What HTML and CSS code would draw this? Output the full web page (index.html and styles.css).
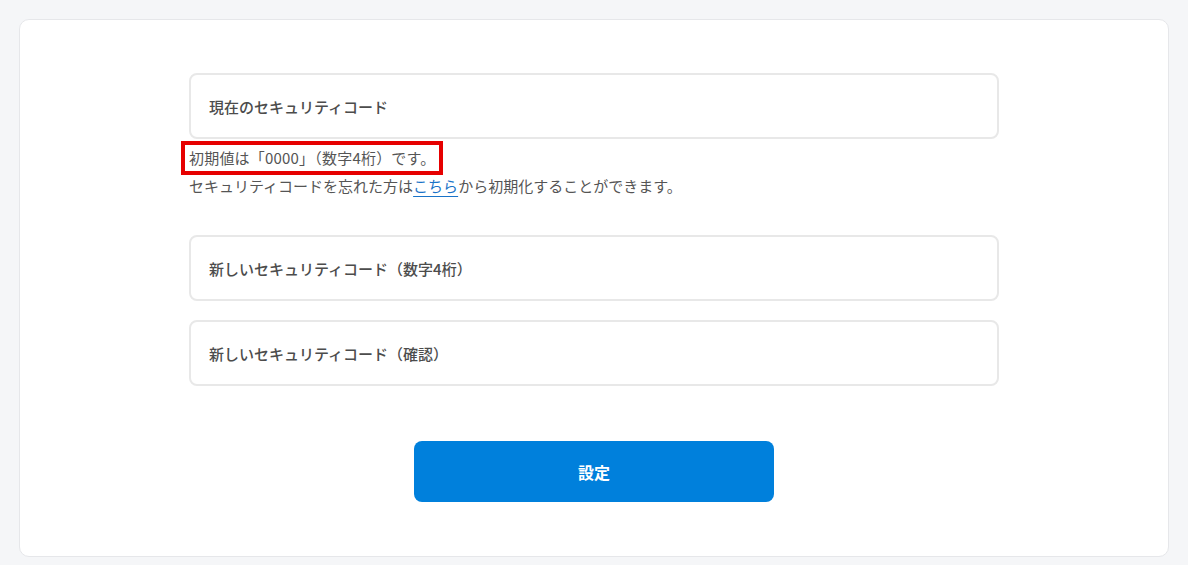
FILE: index.html
```html
<!DOCTYPE html>
<html lang="ja">
<head>
  <meta charset="UTF-8">
  <title>セキュリティコード設定</title>
  <link rel="stylesheet" href="styles.css">
</head>
<body>

<div class="card">
  <form class="form" onsubmit="return false">
    <input type="password" class="field" placeholder="現在のセキュリティコード">

    <div class="note">
      <p class="line line-first"><span class="mark">初期値は「0000」（数字4桁）です。</span></p>
      <p class="line">セキュリティコードを忘れた方は<a href="#">こちら</a>から初期化することができます。</p>
    </div>

    <input type="password" class="field" placeholder="新しいセキュリティコード（数字4桁）">
    <input type="password" class="field" placeholder="新しいセキュリティコード（確認）">

    <button type="submit" class="btn">設定</button>
  </form>
</div>

</body>
</html>
```

FILE: styles.css
```css
body { margin: 0; padding: 19px 19px 8px; background: #f5f6f8; font-family: "Noto Sans CJK JP", "Noto Sans", sans-serif; color: #555; }
.card { background: #fff; border: 1px solid #e6e7ea; border-radius: 10px; padding: 53px 0 54px; }
.form { width: 810px; margin: 0 auto; display: flex; flex-direction: column; }
.field { box-sizing: border-box; height: 66px; width: 100%; padding: 0 18px; margin: 0; border: 2px solid #e8e8e8; border-radius: 8px; font-family: inherit; font-size: 15px; font-weight: 500; color: #444; background: #fff; }
.field::placeholder { color: #4c4c4c; opacity: 1; }
.field + .field { margin-top: 19px; }
.note { padding: 2px 0 0; margin-bottom: 38px; font-size: 15px; }
.line { margin: 0; line-height: 22px; }
.line-first { display: flex; }
.mark { line-height: 26px; border: 4px solid #e60000; padding: 0 4px; margin-left: -8px; letter-spacing: 0.2px; }
.note a { color: #1a73c8; text-decoration: underline; text-underline-offset: 4px; }
.btn { align-self: center; margin-top: 55px; width: 360px; height: 61px; border: none; border-radius: 8px; background: #0080dc; color: #fff; font-family: inherit; font-size: 16px; font-weight: 700; cursor: pointer; }
```
